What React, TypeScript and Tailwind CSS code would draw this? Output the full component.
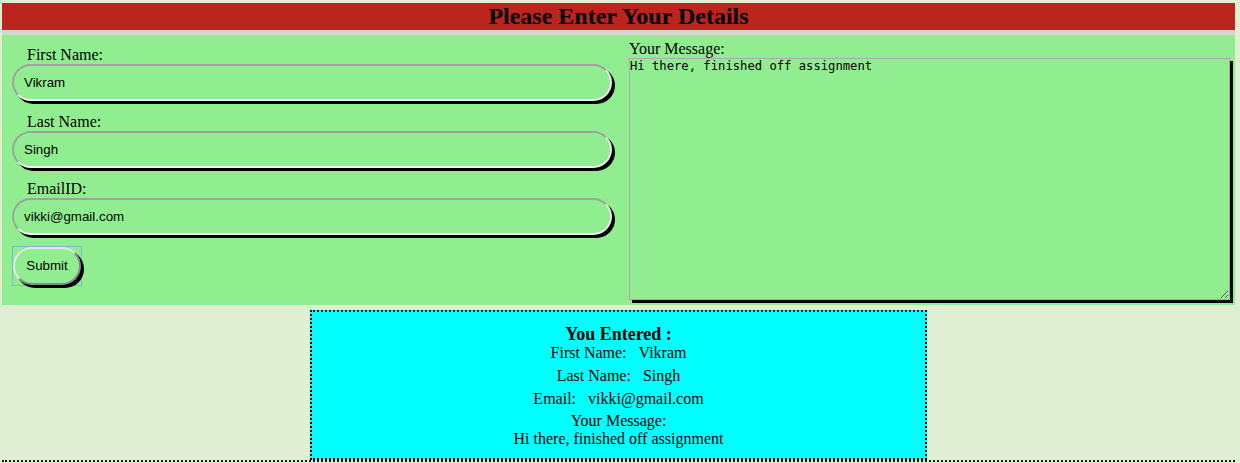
import React from "react";

const serif = { fontFamily: '"Liberation Serif", "Times New Roman", serif' };

function Field({ label, value }: { label: string; value: string }) {
  return (
    <div className="mb-[12px]">
      <div className="pl-[15px] text-[16px] leading-[18px] text-black">{label}</div>
      <input
        readOnly
        value={value}
        className="block h-[37px] w-[600px] rounded-[20px] border-2 border-t-[#a0a0a0] border-l-[#a0a0a0] border-r-[#e8e8e8] border-b-[#f2f2f2] bg-[#90ee90] pl-[10px] text-[13.33px] text-black shadow-[3px_3px_0_#000] outline-none"
        style={{ fontFamily: '"Liberation Sans", Arial, sans-serif' }}
      />
    </div>
  );
}

export default function App() {
  return (
    <div className="min-h-[463px] bg-[#e0efd4] pl-[2px] pr-[5px] pt-[3px]" style={serif}>
      <div className="h-[27px] bg-[#bc241e] text-center text-[24px] font-bold leading-[27px] text-black">
        Please Enter Your Details
      </div>
      <div className="h-[5px] bg-[#d3d3d3]" />
      <div className="flex h-[270px] bg-[#90ee90]">
        <div className="w-[627px] pl-[10px] pt-[11px]">
          <Field label="First Name:" value="Vikram" />
          <Field label="Last Name:" value="Singh" />
          <Field label="EmailID:" value="vikki@gmail.com" />
          <div className="mt-[-1px] inline-block border border-[#7ab8d8] p-0">
            <button
              className="block h-[38px] w-[68px] rounded-[19px] border-2 border-t-[#e6e6e6] border-l-[#e6e6e6] border-r-[#8a8a8a] border-b-[#8a8a8a] bg-[#90ee90] text-[13.33px] text-black shadow-[3px_3px_0_#000]"
              style={{ fontFamily: '"Liberation Sans", Arial, sans-serif' }}
            >
              Submit
            </button>
          </div>
        </div>
        <div className="flex-1 pr-[5px] pt-[5px]">
          <div className="text-[16px] leading-[18px] text-black">Your Message:</div>
          <textarea
            readOnly
            value="Hi there, finished off assignment"
            className="block h-[242px] w-full resize border border-[#a9a9a9] bg-[#90ee90] p-0 text-[12.2px] leading-[14px] text-black shadow-[3px_3px_0_#000] outline-none"
            style={{ fontFamily: '"DejaVu Sans Mono", monospace' }}
          />
        </div>
      </div>
      <div className="flex justify-center border-b-2 border-dotted border-[#1a1a1a] pt-[5px]">
        <div className="w-[617px] border-2 border-dotted border-black bg-[#00ffff] pb-[10px] pt-[12px] text-center text-[16px] text-black">
          <div className="text-[18px] font-bold leading-[20px]">You Entered :</div>
          <div className="leading-[18px]">First Name:{"\u00a0\u00a0\u00a0"}Vikram</div>
          <div className="mt-[5px] leading-[18px]">Last Name:{"\u00a0\u00a0\u00a0"}Singh</div>
          <div className="mt-[5px] leading-[18px]">Email:{"\u00a0\u00a0\u00a0"}vikki@gmail.com</div>
          <div className="mt-[4px] leading-[18px]">Your Message:</div>
          <div className="leading-[18px]">Hi there, finished off assignment</div>
        </div>
      </div>
    </div>
  );
}
